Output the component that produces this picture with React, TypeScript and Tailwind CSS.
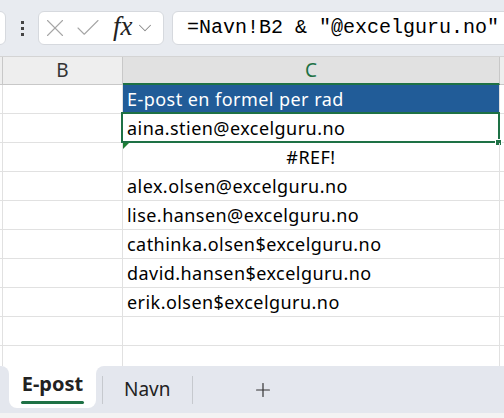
import { X, Check, ChevronDown, Plus } from "lucide-react";

const rows: { text: string; center?: boolean }[] = [
    { text: "E-post en formel per rad" },
    { text: "aina.stien@excelguru.no" },
    { text: "#REF!", center: true },
    { text: "alex.olsen@excelguru.no" },
    { text: "lise.hansen@excelguru.no" },
    { text: "cathinka.olsen$excelguru.no" },
    { text: "david.hansen$excelguru.no" },
    { text: "erik.olsen$excelguru.no" },
    { text: "" },
];

function Toolbar() {
    return (
        <div className="h-[56px] shrink-0 bg-[#e8ebf0] flex items-center">
            <div className="w-[20px] -ml-[14px] h-[34px] rounded-md bg-white border border-[#d6d9de]" />
            <div className="ml-[15px] flex flex-col gap-[3px]">
                <div className="w-[3px] h-[3px] bg-[#444]" />
                <div className="w-[3px] h-[3px] bg-[#444]" />
                <div className="w-[3px] h-[3px] bg-[#444]" />
            </div>
            <div className="ml-[14px] w-[126px] h-[34px] rounded-md bg-white border border-[#d6d9de] flex items-center">
                <X size={30} strokeWidth={0.9} className="ml-[1px] text-[#a6a6a6]" />
                <Check size={30} strokeWidth={0.9} className="ml-[3px] text-[#a6a6a6]" />
                <span className="ml-[10px] font-['Liberation_Serif',serif] italic text-[27px] leading-none text-[#222] -mt-[4px]">
                    fx
                </span>
                <ChevronDown size={22} strokeWidth={1.1} className="ml-[1px] text-[#888]" />
            </div>
            <div className="ml-[8px] flex-1 -mr-[20px] h-[34px] rounded-md bg-white border border-[#d6d9de] flex items-center pl-[14px]">
                <span className="font-['Liberation_Mono',monospace] text-[20px] leading-none text-black whitespace-nowrap">
                    =Navn!B2 &amp; "@excelguru.no"
                </span>
            </div>
        </div>
    );
}

function ColumnHeaders() {
    return (
        <div className="h-[29px] shrink-0 flex border-t border-[#d4d4d4]">
            <div className="w-[3px] bg-[#eeeeee] border-r border-b border-[#c8c8c8]" />
            <div className="w-[120px] bg-[#eeeeee] border-r border-b border-[#c8c8c8] flex items-center justify-center text-[19px] text-[#333]">
                B
            </div>
            <div className="w-[377px] bg-[#e1e1e1] border-r border-[#c8c8c8] border-b-2 border-b-[#1e7145] flex items-center justify-center text-[19px] text-[#1e7145]">
                C
            </div>
            <div className="flex-1 bg-[#eeeeee] border-b border-[#c8c8c8]" />
        </div>
    );
}

function SheetRow({ text, center, index }: { text: string; center?: boolean; index: number }) {
    const isHeader = index === 0;
    const isSelected = index === 1;
    const isError = index === 2;

    return (
        <div className="h-[29px] shrink-0 flex">
            <div className="w-[3px] border-r border-b border-[#e1e1e1]" />
            <div className="w-[120px] border-r border-b border-[#e1e1e1]" />
            <div
                className={
                    isHeader
                        ? "relative w-[377px] bg-[#215c98] text-white border-r border-b border-[#e1e1e1] flex items-end pb-[3px] px-[4px]"
                        : center
                          ? "relative w-[377px] border-r border-b border-[#e1e1e1] flex items-end justify-center pb-[3px] px-[4px]"
                          : "relative w-[377px] border-r border-b border-[#e1e1e1] flex items-end pb-[3px] px-[4px]"
                }
            >
                <span className="text-[18px] leading-[22px] tracking-[0.45px] whitespace-nowrap">{text}</span>
                {isSelected && (
                    <>
                        <div className="absolute left-[-2px] top-[-2px] right-[-1px] bottom-[-1px] border-2 border-[#1e7145]" />
                        <div className="absolute right-[-3px] bottom-[-4px] w-[7px] h-[7px] bg-[#1e7145] border border-white" />
                    </>
                )}
                {isError && (
                    <div className="absolute left-0 top-0 w-0 h-0 border-t-[6px] border-t-[#1e7e34] border-r-[6px] border-r-transparent" />
                )}
            </div>
            <div className="flex-1 border-b border-[#e1e1e1]" />
        </div>
    );
}

function SheetTabs() {
    return (
        <div className="h-[47px] shrink-0 flex bg-white">
            <div className="w-[9px] bg-[#e4e7ee] rounded-tr-[8px]" />
            <div className="w-[87px] bg-[#e4e7ee]">
                <div className="h-[42px] bg-white rounded-b-[8px] flex flex-col items-center justify-center">
                    <span className="text-[20px] font-bold leading-[24px] text-[#222] mt-[2px]">E-post</span>
                    <div className="mt-[5px] w-[63px] h-[3px] bg-[#1e7145] rounded-full" />
                </div>
            </div>
            <div className="flex-1 bg-[#e4e7ee] rounded-tl-[8px] flex items-center">
                <div className="ml-[6px] w-px h-[28px] bg-[#c6c9ce]" />
                <span className="ml-[21px] text-[19px] text-[#222] leading-none">Navn</span>
                <div className="ml-[21px] w-px h-[28px] bg-[#c6c9ce]" />
                <Plus size={22} strokeWidth={1.3} className="ml-[59px] text-[#333]" />
            </div>
        </div>
    );
}

export default function App() {
    return (
        <div className="w-[504px] h-[418px] overflow-hidden bg-white flex flex-col font-['Noto_Sans',sans-serif] text-black">
            <Toolbar />
            <ColumnHeaders />
            {rows.map((row, i) => (
                <SheetRow key={i} index={i} text={row.text} center={row.center} />
            ))}
            <div className="flex-1 flex">
                <div className="w-[3px] border-r border-[#e1e1e1]" />
                <div className="w-[120px] border-r border-[#e1e1e1]" />
                <div className="w-[377px] border-r border-[#e1e1e1]" />
                <div className="flex-1" />
            </div>
            <SheetTabs />
            <div className="h-[5px] shrink-0 bg-[#f3f3f3]" />
        </div>
    );
}
